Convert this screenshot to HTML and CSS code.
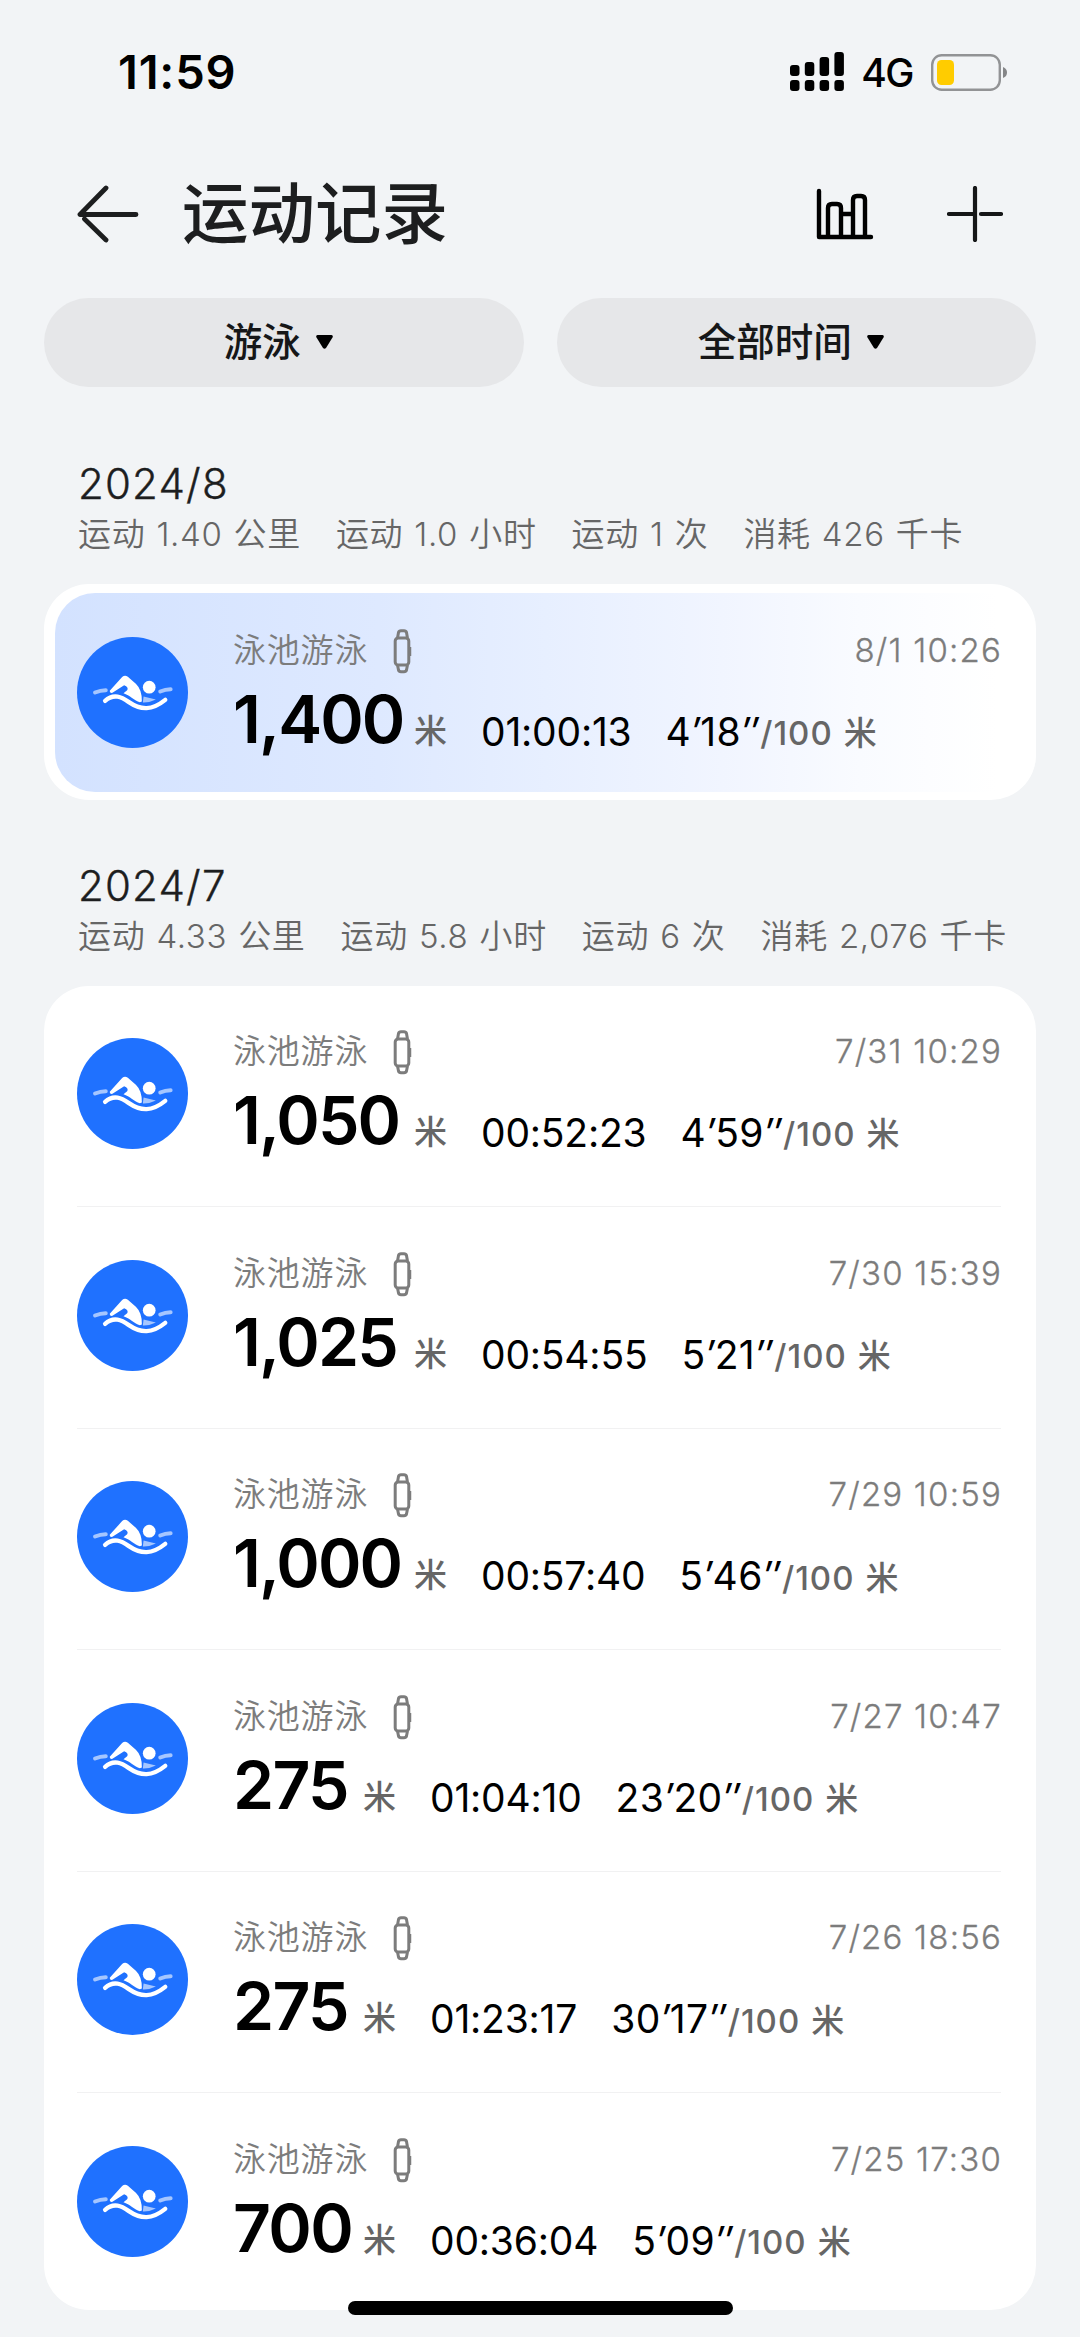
FILE: index.html
```html
<!DOCTYPE html>
<html lang="zh-CN">
<head>
<meta charset="utf-8">
<title>运动记录</title>
<link rel="stylesheet" href="styles.css">
</head>
<body>
<svg class="sprite" aria-hidden="true">
  <symbol id="swim" viewBox="0 0 332 332">
    <circle cx="166" cy="166" r="166" fill="#1f71ff"/>
    <g fill="none" stroke-linecap="round" stroke-linejoin="round">
      <path d="M54 166Q70 159 86 159M249 163Q264 156 280 156" stroke="#a5c6ff" stroke-width="12"/>
      <path d="M84 191C110 168 134 180 154 194C192 220 224 220 264 188" stroke="#fff" stroke-width="13"/>
    </g>
    <path d="M199 178L236 187Q216 197 197 196Z" fill="#a5c6ff"/>
    <path d="M98 161L135 120Q143 112 152 119L176 140Q195 158 194 193L188 195C172 190 158 174 139 168L150 159Q154 152 147 147L141 144L106 167Q97 169 98 161Z" fill="#fff"/>
    <circle cx="216" cy="150" r="19" fill="#fff"/>
  </symbol>
  <symbol id="watch" viewBox="0 0 20 46">
    <g fill="none" stroke="currentColor" stroke-width="3">
      <rect x="2.2" y="10" width="13.600" height="27" rx="3"/>
      <path d="M4.500 10L5.500 4.500Q6 2.800 8 2.800H11Q13 2.800 13.500 4.500L14.500 10M4.500 37L5.500 42Q6 43.700 8 43.700H11Q13 43.700 13.500 42L14.500 37"/>
      <path d="M17 19V28" stroke-width="2.500"/>
    </g>
  </symbol>
</svg>
<div class="screen">
  <div class="status">
    <span class="clock">11:59</span>
    <svg class="signal" viewBox="0 0 54 40"><rect x="0" y="13" width="9.500" height="11" rx="3"/><rect x="14.800" y="10" width="9.500" height="14" rx="3"/><rect x="29.600" y="5" width="9.500" height="19" rx="3"/><rect x="44.400" y="0" width="9.500" height="24" rx="3"/><rect x="0" y="28" width="9.500" height="11" rx="3"/><rect x="14.800" y="28" width="9.500" height="11" rx="3"/><rect x="29.600" y="28" width="9.500" height="11" rx="3"/><rect x="44.400" y="28" width="9.500" height="11" rx="3"/></svg>
    <span class="net">4G</span>
    <svg class="battery" viewBox="0 0 76 37"><rect x="1.200" y="1.200" width="67.600" height="34.600" rx="9.500" fill="none" stroke="#929395" stroke-width="2.400"/><rect x="6" y="6" width="17" height="25" rx="4.500" fill="#fc0"/><path d="M72 13Q76 14.500 76 18.500T72 24Z" fill="#858688"/></svg>
  </div>
  <header class="header">
    <svg class="back" viewBox="0 0 62 58"><path d="M29 3L3 29.500H59M7.500 34L29 55" fill="none" stroke="#1d1e1f" stroke-width="4.800" stroke-linecap="round" stroke-linejoin="round"/></svg>
    <h1>运动记录</h1>
    <svg class="chart" viewBox="0 0 58 52"><path d="M3 3V49H55M12 49V20Q12 16 16 16H21Q25 16 25 20V49M37 49V12Q37 8 41 8H45Q49 8 49 12V49M25 26H37" fill="none" stroke="#000" stroke-width="4.400" stroke-linecap="round" stroke-linejoin="round"/></svg>
    <svg class="plus" viewBox="0 0 56 56"><path d="M28 2V54M2 28H26M34 28H54" fill="none" stroke="#161718" stroke-width="4.200" stroke-linecap="round"/></svg>
  </header>
  <nav class="filters">
    <div class="pill">游泳<svg viewBox="0 0 17 14"><path d="M1.500 0H15.500Q17.500 0.500 16.500 2.500L10 13Q8.500 14.500 7 13L.5 2.500Q-.5 .5 1.500 0Z"/></svg></div>
    <div class="pill">全部时间<svg viewBox="0 0 17 14"><path d="M1.500 0H15.500Q17.500 0.500 16.500 2.500L10 13Q8.500 14.500 7 13L.5 2.500Q-.5 .5 1.500 0Z"/></svg></div>
  </nav>

  <section class="month">
    <h2>2024/8</h2>
    <div class="stats"><span>运动 1.40 公里</span><span>运动 1.0 小时</span><span>运动 1 次</span><span>消耗 426 千卡</span></div>
    <div class="card selected">
      <div class="row"><svg class="sport"><use href="#swim"/></svg><div class="body"><div class="top"><span>泳池游泳</span><svg class="watch"><use href="#watch"/></svg><time>8/1 10:26</time></div><div class="data"><b class="wide">1,400</b><i>米</i><span class="dur">01:00:13</span><span class="pace">4<em>′</em>18<em>″</em></span><i class="per">/100 米</i></div></div></div>
    </div>
  </section>

  <section class="month">
    <h2>2024/7</h2>
    <div class="stats"><span>运动 4.33 公里</span><span>运动 5.8 小时</span><span>运动 6 次</span><span>消耗 2,076 千卡</span></div>
    <div class="card">
      <div class="row"><svg class="sport"><use href="#swim"/></svg><div class="body"><div class="top"><span>泳池游泳</span><svg class="watch"><use href="#watch"/></svg><time>7/31 10:29</time></div><div class="data"><b class="wide">1,050</b><i>米</i><span class="dur">00:52:23</span><span class="pace">4<em>′</em>59<em>″</em></span><i class="per">/100 米</i></div></div></div>
      <div class="row"><svg class="sport"><use href="#swim"/></svg><div class="body"><div class="top"><span>泳池游泳</span><svg class="watch"><use href="#watch"/></svg><time>7/30 15:39</time></div><div class="data"><b class="wide">1,025</b><i>米</i><span class="dur">00:54:55</span><span class="pace">5<em>′</em>21<em>″</em></span><i class="per">/100 米</i></div></div></div>
      <div class="row"><svg class="sport"><use href="#swim"/></svg><div class="body"><div class="top"><span>泳池游泳</span><svg class="watch"><use href="#watch"/></svg><time>7/29 10:59</time></div><div class="data"><b class="wide">1,000</b><i>米</i><span class="dur">00:57:40</span><span class="pace">5<em>′</em>46<em>″</em></span><i class="per">/100 米</i></div></div></div>
      <div class="row"><svg class="sport"><use href="#swim"/></svg><div class="body"><div class="top"><span>泳池游泳</span><svg class="watch"><use href="#watch"/></svg><time>7/27 10:47</time></div><div class="data"><b>275</b><i>米</i><span class="dur">01:04:10</span><span class="pace">23<em>′</em>20<em>″</em></span><i class="per">/100 米</i></div></div></div>
      <div class="row"><svg class="sport"><use href="#swim"/></svg><div class="body"><div class="top"><span>泳池游泳</span><svg class="watch"><use href="#watch"/></svg><time>7/26 18:56</time></div><div class="data"><b>275</b><i>米</i><span class="dur">01:23:17</span><span class="pace">30<em>′</em>17<em>″</em></span><i class="per">/100 米</i></div></div></div>
      <div class="row"><svg class="sport"><use href="#swim"/></svg><div class="body"><div class="top"><span>泳池游泳</span><svg class="watch"><use href="#watch"/></svg><time>7/25 17:30</time></div><div class="data"><b>700</b><i>米</i><span class="dur">00:36:04</span><span class="pace">5<em>′</em>09<em>″</em></span><i class="per">/100 米</i></div></div></div>
    </div>
  </section>
  <div class="home"></div>
</div>
</body>
</html>
```
FILE: styles.css
```css
* { box-sizing: border-box; margin: 0; padding: 0; }
body {
  background: #f2f4f6;
  font-family: Inter, "Noto Sans CJK SC", sans-serif;
  color: #000;
  white-space: nowrap;
}
svg { display: block; flex: none; }
.sprite { position: absolute; width: 0; height: 0; }
.screen { position: relative; width: 1080px; height: 2337px; overflow: hidden; }

.status { display: flex; align-items: center; height: 144px; padding: 0 73px 0 118px; }
.clock { font-size: 47px; font-weight: 600; line-height: 60px; letter-spacing: .8px; }
.signal { width: 54px; height: 40px; margin-left: auto; }
.net { font-size: 39px; font-weight: 500; line-height: 50px; margin: 2px 18px 0 17px; letter-spacing: -1.500px; }
.battery { width: 76px; height: 37px; }

.header { display: flex; align-items: center; height: 140px; padding: 0 77px 0 77px; }
.back { width: 62px; height: 58px; }
h1 { margin-left: 43px; font-size: 66.500px; font-weight: 500; line-height: 90px; color: #1d1e1f; }
.chart { width: 58px; height: 52px; margin-left: auto; }
.plus { width: 56px; height: 56px; margin-left: 73px; }

.filters { display: flex; gap: 33px; padding: 14px 44px 0; }
.pill {
  flex: 1; display: flex; align-items: center; justify-content: center; gap: 15px;
  height: 88.500px; padding: 0 11px 6px 0; border-radius: 45px; background: #e6e7e9;
  font-size: 38.500px; font-weight: 500; color: #161718;
}
.pill svg { width: 17px; height: 14px; margin-top: 5px; fill: #000; }

.month { padding: 0 44px; }
.month:first-of-type { padding-top: 67.500px; }
.month + .month { padding-top: 55.500px; }
h2 { padding-left: 34px; font-size: 42px; font-weight: 350; line-height: 60px; letter-spacing: 1.200px; color: #1d1e1f; -webkit-text-stroke: .4px; }
.stats { display: flex; gap: 35px; height: 46px; padding-left: 34px; font-size: 33px; font-weight: 350; line-height: 40px; letter-spacing: .65px; word-spacing: 1.200px; color: #666; }
.card { margin-top: 24px; border-radius: 45px; background: #fff; }
.selected { height: 216px; border: solid #fff; border-width: 9px 0 8px 11px; }
.row { display: flex; height: 220.500px; margin: 0 35px 0 33px; padding-top: 52px; }
.row + .row { height: 221.500px; padding-top: 52.500px; border-top: 1px solid #f1f1f2; }
.row + .row:last-child { height: 217.500px; }
.selected .row { height: 199px; margin: 0; padding: 43.500px 35px 0 22px; border-radius: 40px; background: linear-gradient(90deg, #d3e2ff, #dee9ff 33%, #e7efff 50%, #f1f5ff 68%, #f9fbff 82%, #fff 96%); }
.sport { width: 111px; height: 111px; }
.body { flex: 1; margin: -11px 0 0 45px; }
.top { display: flex; height: 48px; align-items: center; font-size: 33px; font-weight: 350; line-height: 48px; letter-spacing: .8px; color: #7c7c7c; }
.watch { width: 20px; height: 46px; margin: 2px 0 0 25px; }
time { margin: 0 -1px 0 auto; letter-spacing: 1.200px; -webkit-text-stroke: .3px; }
.data { display: flex; align-items: flex-end; height: 85px; }
b { width: 115.500px; font-size: 66px; font-weight: 600; line-height: 80px; letter-spacing: -1.700px; }
b.wide { width: 166.500px; letter-spacing: -1.900px; }
i { font-style: normal; font-size: 33px; font-weight: 500; line-height: 48px; color: #666; margin: 0 0 4px 14.500px; }
.dur, .pace { font-size: 39px; line-height: 48px; margin: 0 0 3px 34px; letter-spacing: -.2px; }
.pace { letter-spacing: .4px; }
.pace em { font-style: italic; }
i.per { margin: 0 0 1.500px 1.500px; letter-spacing: 1px; word-spacing: 1.200px; }
.home { position: absolute; left: 348px; top: 2301px; width: 385px; height: 14px; border-radius: 7px; background: #000; }
```
